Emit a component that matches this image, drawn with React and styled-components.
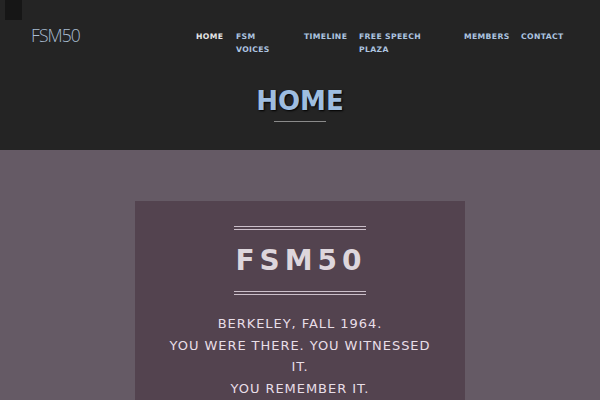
import React from "react";
import styled, { createGlobalStyle } from "styled-components";

const Global = createGlobalStyle`
  html, body { margin: 0; padding: 0; }
  body { background: #655a65; font-family: "DejaVu Sans", sans-serif; }
`;

const Page = styled.div`
  width: 600px;
  height: 400px;
  overflow: hidden;
  background: #655a65;
`;

const Header = styled.header`
  position: relative;
  height: 150px;
  background: #242424;
  display: flex;
  flex-direction: column;
`;

const Corner = styled.div`
  position: absolute;
  left: 5px;
  top: 0;
  width: 17px;
  height: 20px;
  background: #161616;
`;

const TopBar = styled.div`
  display: flex;
  align-items: flex-start;
  padding: 24px 0 0 31px;
  height: 50px;
  box-sizing: border-box;
`;

const Logo = styled.div`
  flex-shrink: 0;
  width: 48px;
  font-family: "Open Sans", sans-serif;
  font-weight: 300;
  font-size: 17.5px;
  line-height: 22px;
  letter-spacing: -0.9px;
  color: #a9bdd2;
  white-space: nowrap;
`;

const Nav = styled.nav`
  display: flex;
  gap: 14px;
  margin-left: 117px;
  padding-top: 6px;
`;

const NavItem = styled.a`
  display: block;
  flex-shrink: 0;
  width: ${(p) => p.$w}px;
  font-family: "DejaVu Sans", sans-serif;
  font-weight: bold;
  font-size: 7.7px;
  line-height: 13px;
  letter-spacing: 0.35px;
  color: ${(p) => (p.$active ? "#e6e6e6" : "#adc4e0")};
  text-transform: uppercase;
`;

const TitleWrap = styled.div`
  display: flex;
  flex-direction: column;
  align-items: center;
  padding-top: 35px;
`;

const Title = styled.h1`
  margin: 0;
  font-family: "DejaVu Sans", sans-serif;
  font-weight: bold;
  font-size: 26px;
  line-height: 32px;
  color: #9ebde0;
  text-shadow: 1px 1px 2px #000;
`;

const TitleRule = styled.div`
  width: 52px;
  height: 1px;
  margin-top: 4px;
  background: #8a8a8a;
`;

const Main = styled.main`
  display: flex;
  justify-content: center;
  padding-top: 51px;
`;

const Card = styled.section`
  width: 330px;
  height: 260px;
  background: #53434f;
  box-sizing: border-box;
  padding: 25px 30px 0;
  display: flex;
  flex-direction: column;
  align-items: center;
`;

const DoubleRule = styled.div`
  width: 132px;
  height: 4px;
  border-top: 1px solid #cbbfca;
  border-bottom: 1px solid #cbbfca;
  box-sizing: border-box;
`;

const CardTitle = styled.h2`
  margin: 0;
  padding: 14px 0 13px 2px;
  font-family: "DejaVu Sans", sans-serif;
  font-weight: bold;
  font-size: 28px;
  line-height: 34px;
  letter-spacing: 5px;
  color: #ddd6dc;
`;

const Lead = styled.p`
  margin: 18px 0 0;
  font-family: "DejaVu Sans", sans-serif;
  font-size: 13px;
  line-height: 21.6px;
  letter-spacing: 0.95px;
  color: #e8dee7;
  text-align: center;
  text-transform: uppercase;
`;

const navItems = [
  { label: "Home", w: 26, active: true },
  { label: "FSM Voices", w: 54 },
  { label: "Timeline", w: 41 },
  { label: "Free Speech Plaza", w: 91 },
  { label: "Members", w: 43 },
  { label: "Contact", w: 42 },
];

export default function App() {
  return (
    <Page>
      <Global />
      <Header>
        <Corner />
        <TopBar>
          <Logo>FSM50</Logo>
          <Nav>
            {navItems.map((n) => (
              <NavItem key={n.label} $w={n.w} $active={n.active}>
                {n.label}
              </NavItem>
            ))}
          </Nav>
        </TopBar>
        <TitleWrap>
          <Title>HOME</Title>
          <TitleRule />
        </TitleWrap>
      </Header>
      <Main>
        <Card>
          <DoubleRule />
          <CardTitle>FSM50</CardTitle>
          <DoubleRule />
          <Lead>
            Berkeley, Fall 1964.
            <br />
            You were there. You witnessed it.
            <br />
            You remember it.
          </Lead>
        </Card>
      </Main>
    </Page>
  );
}
